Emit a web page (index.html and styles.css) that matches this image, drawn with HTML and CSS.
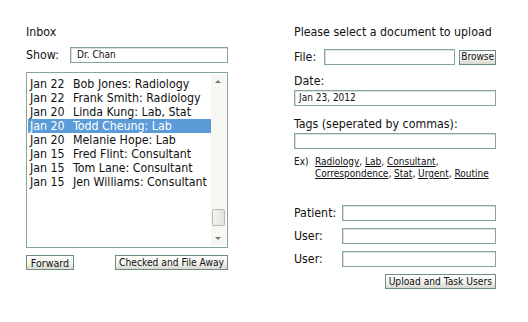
FILE: index.html
```html
<!DOCTYPE html>
<html lang="en">
<head>
    <meta charset="UTF-8">
    <title>Inbox</title>
    <link rel="stylesheet" href="styles.css">
</head>
<body>

    <div class="page">
        <!-- Inbox column -->
        <div class="inbox">
            <div class="title">Inbox</div>

            <div class="show-row">
                <span class="label">Show:</span>
                <div class="field show-field">Dr. Chan</div>
            </div>

            <div class="listbox">
                <div class="rows">
                    <div class="row"><span class="day">Jan 22</span>Bob Jones: Radiology</div>
                    <div class="row"><span class="day">Jan 22</span>Frank Smith: Radiology</div>
                    <div class="row"><span class="day">Jan 20</span>Linda Kung: Lab, Stat</div>
                    <div class="row selected"><span class="day">Jan 20</span>Todd Cheung: Lab</div>
                    <div class="row"><span class="day">Jan 20</span>Melanie Hope: Lab</div>
                    <div class="row"><span class="day">Jan 15</span>Fred Flint: Consultant</div>
                    <div class="row"><span class="day">Jan 15</span>Tom Lane: Consultant</div>
                    <div class="row"><span class="day">Jan 15</span>Jen Williams: Consultant</div>
                </div>
                <div class="scrollbar">
                    <div class="arrow up"></div>
                    <div class="track">
                        <div class="thumb"></div>
                    </div>
                    <div class="arrow down"></div>
                </div>
            </div>

            <div class="inbox-buttons">
                <button class="btn forward">Forward</button>
                <button class="btn">Checked and File Away</button>
            </div>
        </div>

        <!-- Upload column -->
        <div class="upload">
            <div class="title">Please select a document to upload</div>

            <div class="file-row">
                <span class="label">File:</span>
                <div class="field file-field"></div>
                <button class="btn browse">Browse</button>
            </div>

            <div class="label block">Date:</div>
            <div class="field wide">Jan 23, 2012</div>

            <div class="label block tags-label">Tags (seperated by commas):</div>
            <div class="field wide"></div>

            <div class="examples">
                <span class="ex">Ex)</span>
                <div class="tag-links">
                    <a href="#">Radiology</a>, <a href="#">Lab</a>, <a href="#">Consultant</a>,<br>
                    <a href="#">Correspondence</a>, <a href="#">Stat</a>, <a href="#">Urgent</a>, <a href="#">Routine</a>
                </div>
            </div>

            <div class="people">
                <div class="person-row">
                    <span class="label">Patient:</span>
                    <div class="field person-field"></div>
                </div>
                <div class="person-row">
                    <span class="label">User:</span>
                    <div class="field person-field"></div>
                </div>
                <div class="person-row">
                    <span class="label">User:</span>
                    <div class="field person-field"></div>
                </div>
            </div>

            <div class="upload-buttons">
                <button class="btn">Upload and Task Users</button>
            </div>
        </div>
    </div>

</body>
</html>
```

FILE: styles.css
```css
/* General reset */
* {
    margin: 0;
    padding: 0;
    box-sizing: border-box;
}

body {
    background-color: #ffffff;
    font-family: 'DejaVu Sans Condensed', 'DejaVu Sans', sans-serif;
    font-size: 12.3px;
    color: #111;
}

.page {
    display: flex;
    gap: 66px;
    padding: 25px 0 0 26px;
}

.title {
    height: 14px;
    line-height: 14px;
}

.label {
    line-height: 16px;
}

/* Text boxes */
.field {
    height: 16px;
    border: 1px solid #86a49a;
    box-shadow: inset 1px 1px 0 #d8e2de;
    background-color: #fff;
    font-size: 10px;
    line-height: 14px;
    padding-left: 4px;
}

/* Buttons */
.btn {
    height: 15px;
    font-family: inherit;
    font-size: 10.2px;
    line-height: 12px;
    color: #111;
    padding: 0 3px;
    border: 1px solid #6f8b81;
    background: linear-gradient(#ffffff, #f1f1ec 60%, #d9d9d2);
    cursor: pointer;
}

.forward {
    width: 48px;
    font-size: 10.6px;
}

/* Inbox column */
.inbox {
    width: 202px;
}

.show-row {
    display: flex;
    justify-content: space-between;
    margin-top: 8px;
}

.show-field {
    width: 158px;
    padding-left: 6px;
}

.listbox {
    display: flex;
    height: 176px;
    margin-top: 9px;
    border: 1px solid #86a49a;
}

.rows {
    flex: 1;
    padding: 4px 0 0 1px;
}

.row {
    height: 14px;
    line-height: 14px;
    padding-left: 2px;
    white-space: nowrap;
}

.row .day {
    display: inline-block;
    width: 43px;
}

.row.selected {
    background-color: #5b9bd8;
    color: #ffffff;
}

.scrollbar {
    width: 15px;
    display: flex;
    flex-direction: column;
    background-color: #f6f6f3;
    margin: 1px 1px 1px 0;
}

.arrow {
    height: 15px;
    position: relative;
}

.arrow::after {
    content: "";
    position: absolute;
    left: 4px;
    top: 6px;
    border-left: 3px solid transparent;
    border-right: 3px solid transparent;
}

.arrow.up::after {
    border-bottom: 3px solid #777;
}

.arrow.down::after {
    border-top: 3px solid #777;
}

.track {
    flex: 1;
    display: flex;
    flex-direction: column;
    justify-content: flex-end;
    padding-bottom: 5px;
}

.thumb {
    height: 17px;
    margin: 0 1px;
    border: 1px solid #b9b9b5;
    border-radius: 2px;
    background: linear-gradient(90deg, #f4f4f2, #e2e2de);
}

.inbox-buttons {
    display: flex;
    justify-content: space-between;
    margin-top: 7px;
}

/* Upload column */
.upload {
    width: 202px;
}

.file-row {
    display: flex;
    align-items: center;
    margin-top: 10px;
}

.file-field {
    width: 133px;
    margin-left: 8px;
}

.browse {
    margin-left: 4px;
    width: 37px;
    padding: 0;
    font-size: 10px;
}

.block {
    margin-top: 8px;
}

.wide {
    width: 202px;
    margin-top: 1px;
}

.tags-label {
    margin-top: 10px;
}

.examples {
    display: flex;
    margin-top: 7px;
    font-size: 10px;
    line-height: 12px;
}

.ex {
    width: 21px;
}

.tag-links a {
    color: #111;
}

.people {
    margin-top: 25px;
}

.person-row {
    display: flex;
    justify-content: space-between;
    margin-bottom: 7px;
}

.person-field {
    width: 154px;
}

.upload-buttons {
    display: flex;
    justify-content: flex-end;
    margin-top: 1px;
}
```
